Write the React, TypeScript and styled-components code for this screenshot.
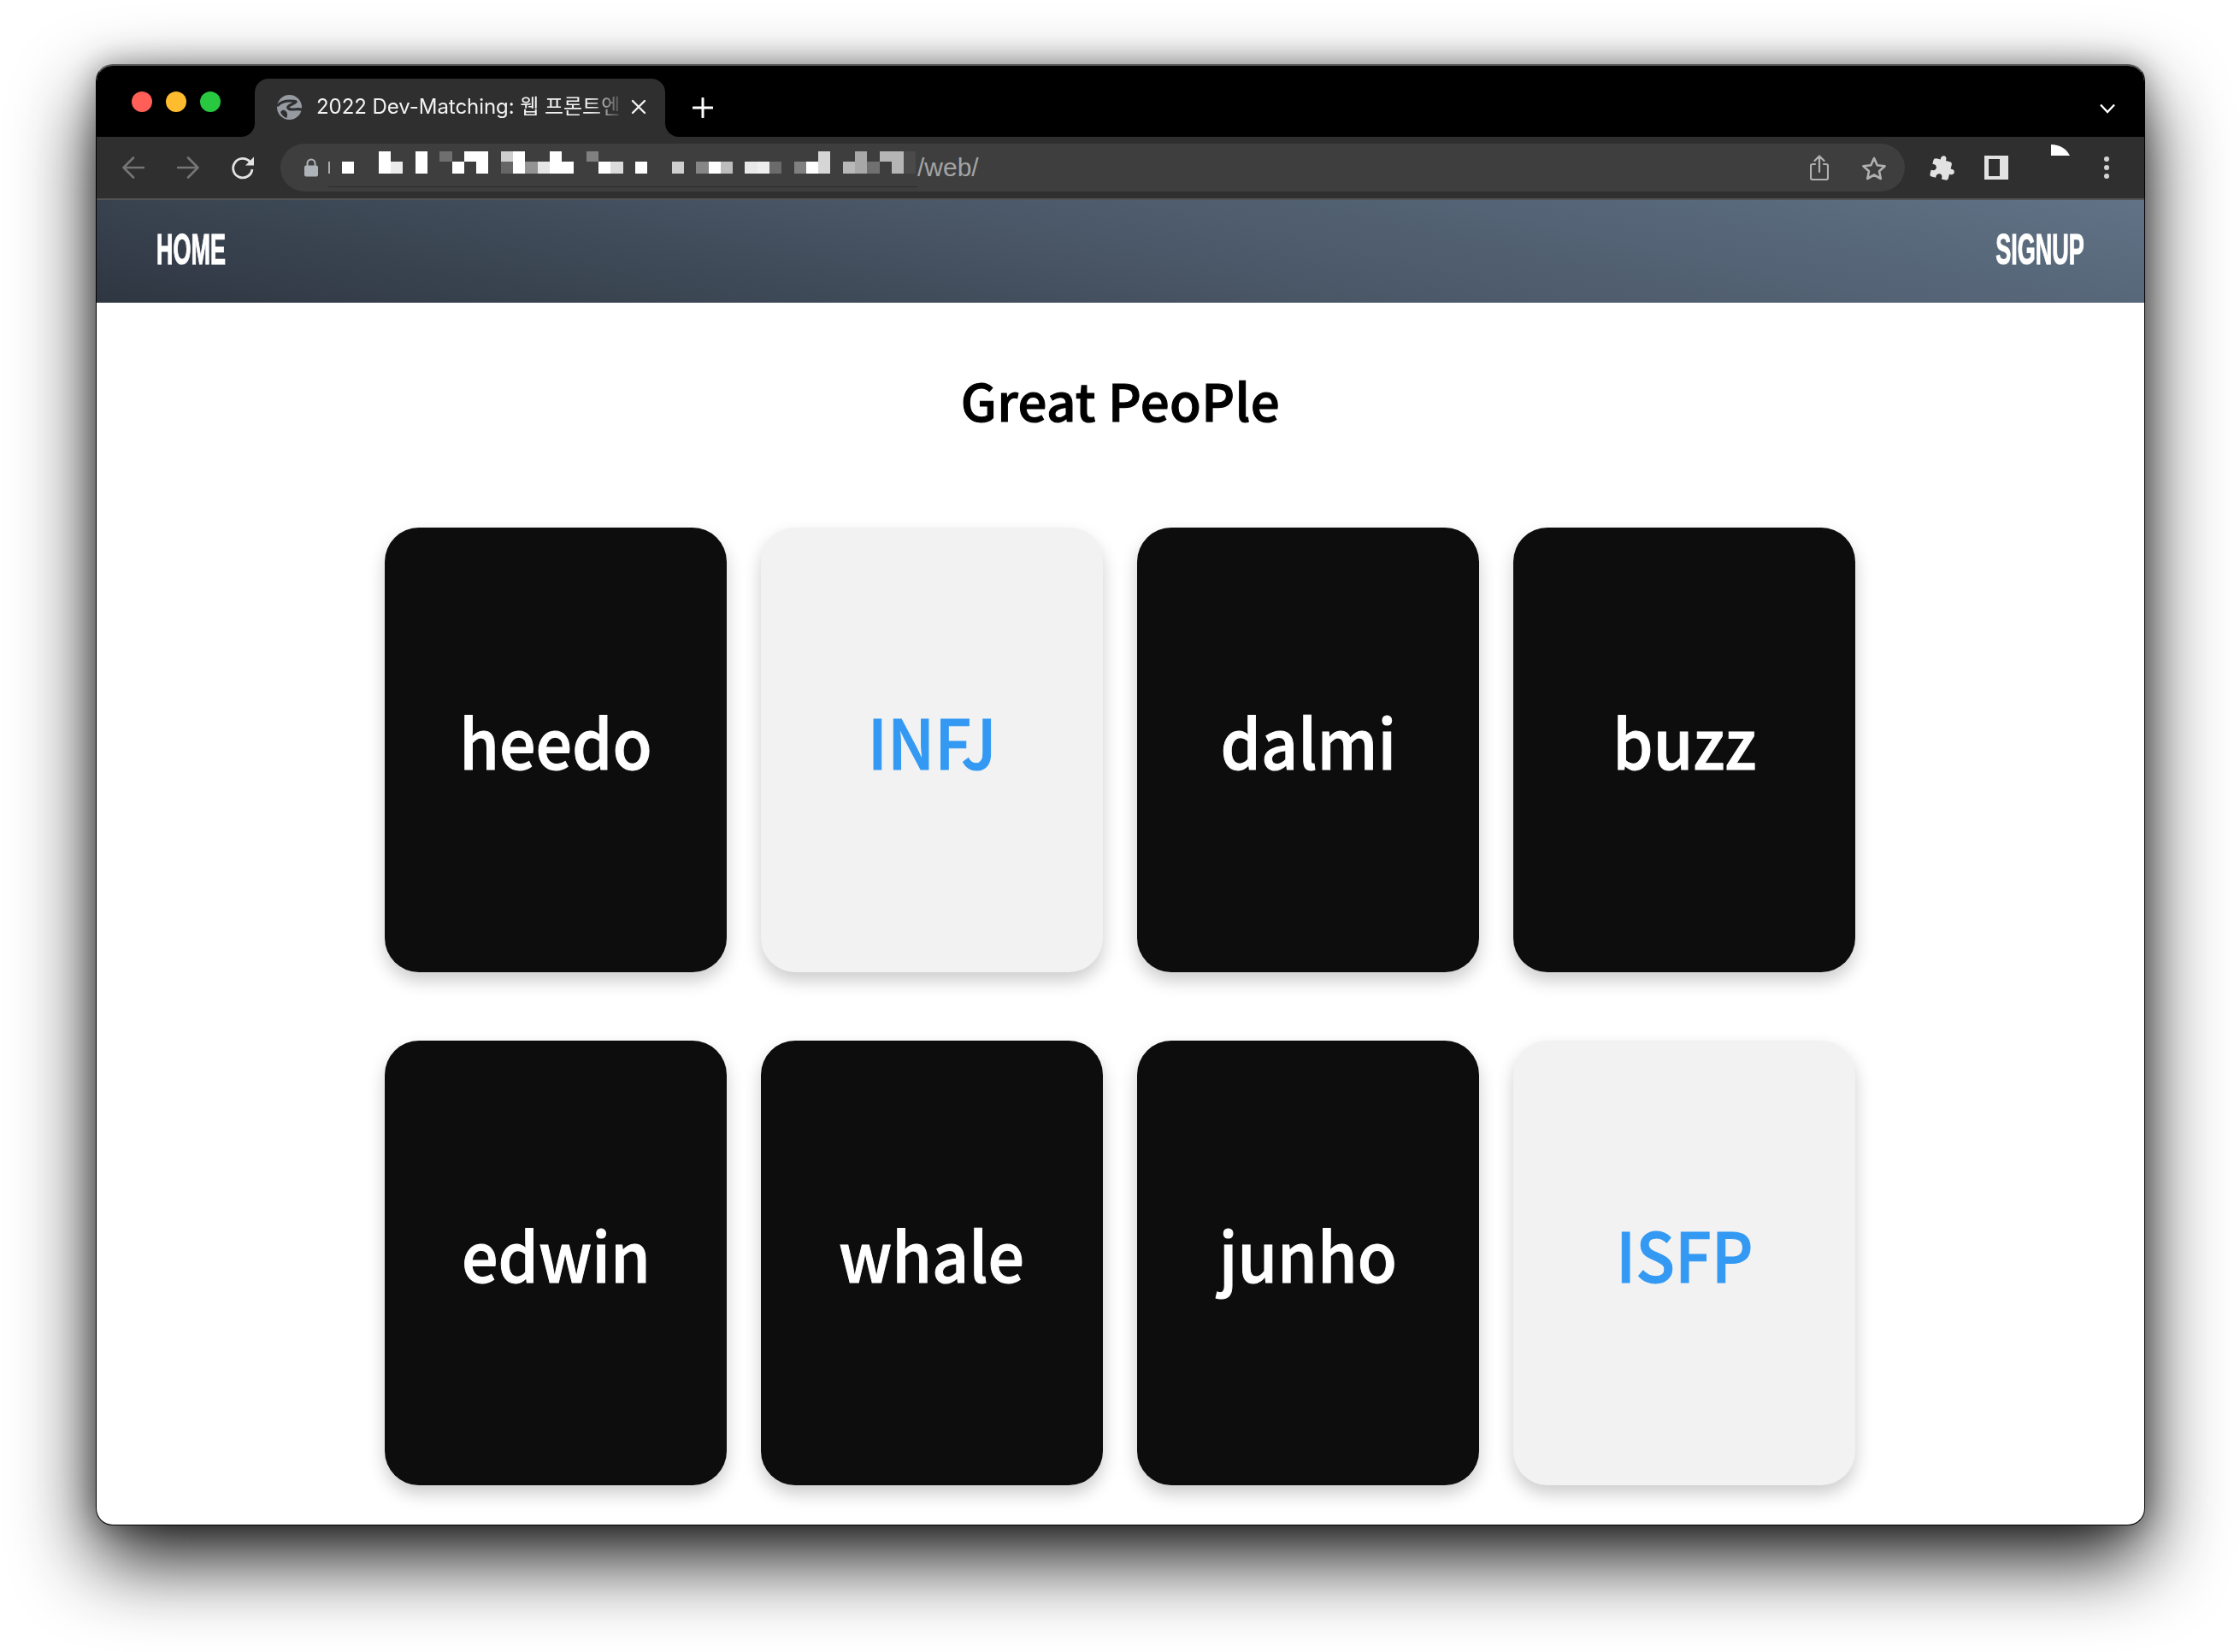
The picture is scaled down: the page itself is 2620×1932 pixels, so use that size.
import React from "react";
import styled, { createGlobalStyle } from "styled-components";

const Global = createGlobalStyle`
  html, body { margin: 0; padding: 0; background: #fff; }
  * { box-sizing: border-box; }
`;

const Page = styled.div`
  width: 2620px;
  height: 1932px;
  padding: 75px 111px 148px 112px;
  overflow: hidden;
  background: #fff;
`;

const Window = styled.div`
  height: 100%;
  display: flex;
  flex-direction: column;
  overflow: hidden;
  border: 1px solid #000;
  border-top: 2px solid #555;
  border-radius: 20px;
  background: #fff;
  box-shadow: 0 40px 92px rgba(0, 0, 0, 0.9), 0 0 34px rgba(0, 0, 0, 0.35);
`;

const TabStrip = styled.div`
  height: 83px;
  flex: none;
  display: flex;
  align-items: flex-end;
  background: #000;
`;

const Lights = styled.div`
  width: 185px;
  height: 100%;
  flex: none;
  display: flex;
  gap: 16px;
  padding: 30px 0 0 41px;
`;

const Light = styled.span<{ $c: string }>`
  width: 24px;
  height: 24px;
  border-radius: 50%;
  background: ${(p) => p.$c};
`;

const Tab = styled.div`
  position: relative;
  width: 480px;
  height: 68px;
  flex: none;
  display: flex;
  align-items: center;
  padding: 0 0 2px 26px;
  background: #2f2f2f;
  border-radius: 16px 16px 0 0;
  &::before, &::after {
    content: "";
    position: absolute;
    bottom: 0;
    width: 16px;
    height: 16px;
  }
  &::before { left: -16px; background: radial-gradient(circle at 0 0, #000 15.5px, #2f2f2f 16.5px); }
  &::after { right: -16px; background: radial-gradient(circle at 100% 0, #000 15.5px, #2f2f2f 16.5px); }
`;

const Favicon = styled.svg`
  flex: none;
`;

const TabTitle = styled.div`
  width: 356px;
  margin-left: 17px;
  flex: none;
  white-space: nowrap;
  color: #f2f2f2;
  font: 400 24px/1.3 Inter, "Noto Sans CJK KR", sans-serif;
  letter-spacing: -0.05px;
  -webkit-mask-image: linear-gradient(to right, #000 90%, rgba(0, 0, 0, 0.15) 100%);
  mask-image: linear-gradient(to right, #000 90%, rgba(0, 0, 0, 0.15) 100%);
`;

const TabClose = styled.svg`
  margin-left: 12px;
  flex: none;
`;

const NewTab = styled.svg`
  margin: 0 0 22px 32px;
  flex: none;
`;

const StripEnd = styled.svg`
  margin: 0 34px 27px auto;
  flex: none;
`;

const Toolbar = styled.div`
  height: 74px;
  flex: none;
  display: flex;
  align-items: center;
  background: #2f2f2f;
  border-bottom: 2px solid #545454;
`;

const ToolIcon = styled.svg<{ $ml: number }>`
  flex: none;
  margin-left: ${(p) => p.$ml}px;
`;

const PieGlyph = styled.svg`
  flex: none;
  align-self: flex-start;
  margin: 9px 0 0 50px;
`;

const Omnibox = styled.div`
  width: 1900px;
  height: 56px;
  flex: none;
  margin-left: 30px;
  display: flex;
  align-items: center;
  padding: 0 21px 0 27px;
  background: #3e3e3e;
  border-radius: 28px;
`;

const LockIcon = styled.svg`
  flex: none;
`;

const Mosaic = styled.svg`
  flex: none;
  align-self: flex-start;
  margin: 9px 0 0 11px;
`;

const UrlPath = styled.span`
  color: #a4a4a4;
  font: 400 30px/1 "Liberation Sans", sans-serif;
`;

const Spacer = styled.div`
  flex: 1;
`;

const ShareIcon = styled.svg`
  flex: none;
`;

const Header = styled.header`
  height: 120px;
  flex: none;
  display: flex;
  align-items: center;
  justify-content: space-between;
  padding: 0 70px 5px;
  background: linear-gradient(12deg, #2e3641 0%, #4a5767 50%, #607286 100%);
`;

const NavLink = styled.a<{ $origin: string }>`
  display: inline-block;
  color: #fff;
  font: 700 50px/1 "Liberation Sans", sans-serif;
  transform: scaleX(0.54);
  transform-origin: ${(p) => p.$origin} center;
  -webkit-text-stroke: 1.2px #fff;
`;

const Main = styled.main`
  flex: 1;
  min-height: 0;
`;

const Title = styled.h1`
  margin: 0;
  padding-top: 69px;
  height: 263px;
  text-align: center;
  color: #000;
  font: 500 60px/88px "Noto Sans CJK KR", sans-serif;
  letter-spacing: 0.4px;
  -webkit-text-stroke: 1.1px #000;
`;

const Grid = styled.div`
  width: 1720px;
  margin-left: 337px;
  display: grid;
  grid-template-columns: repeat(4, 400px);
  grid-auto-rows: 520px;
  column-gap: 40px;
  row-gap: 80px;
`;

const Card = styled.div<{ $flipped?: boolean }>`
  display: flex;
  align-items: center;
  justify-content: center;
  padding-bottom: 25px;
  border-radius: 40px;
  background: ${(p) => (p.$flipped ? "#f2f2f2" : "#0d0d0d")};
  color: ${(p) => (p.$flipped ? "#3399f3" : "#fff")};
  box-shadow: 0 10px 20px rgba(0, 0, 0, 0.2);
`;

const CardLabel = styled.span`
  display: inline-block;
  font: 500 80px/1.2 "Noto Sans CJK KR", sans-serif;
  transform: scaleX(0.94);
  -webkit-text-stroke: 1px currentColor;
`;

const mosaic: [number, number, number, string][] = [
  [384, 189, 2, "#a8aeb5"], [400, 189, 14, "#fff"],
  [443, 177, 14, "#fff"], [443, 189, 14, "#fff"], [457, 189, 14, "#ececec"],
  [486, 177, 14, "#fff"], [486, 189, 14, "#fff"],
  [514, 177, 15, "#6f6f6f"], [529, 189, 14, "#fff"], [543, 177, 14, "#fff"],
  [557, 177, 14, "#fff"], [557, 189, 14, "#fff"],
  [586, 177, 14, "#cfcfcf"], [586, 189, 14, "#666"], [600, 177, 14, "#fff"], [600, 189, 14, "#fff"],
  [614, 189, 15, "#939393"], [629, 189, 14, "#e6e6e6"], [643, 177, 14, "#fff"], [643, 189, 14, "#fff"],
  [657, 189, 14, "#fff"], [686, 177, 14, "#808080"], [700, 189, 14, "#fff"], [714, 189, 15, "#dcdcdc"],
  [743, 189, 14, "#fff"], [786, 189, 14, "#cfcfcf"], [814, 189, 15, "#868686"], [829, 189, 14, "#fff"],
  [843, 189, 14, "#bdbdbd"], [871, 189, 15, "#e8e8e8"], [886, 189, 14, "#eee"], [900, 189, 14, "#6b6b6b"],
  [929, 189, 14, "#808080"], [943, 189, 14, "#fff"], [957, 177, 14, "#d6d6d6"], [957, 189, 14, "#d6d6d6"],
  [986, 189, 14, "#b8b8b8"], [1000, 177, 14, "#a8a8a8"], [1000, 189, 14, "#a8a8a8"], [1014, 189, 15, "#707070"],
  [1029, 177, 14, "#b5b5b5"], [1043, 177, 14, "#b5b5b5"], [1043, 189, 14, "#b5b5b5"],
  [1057, 177, 14, "#4a4a4a"], [1057, 189, 14, "#4a4a4a"],
];

const cards: { label: string; flipped?: boolean }[] = [
  { label: "heedo" }, { label: "INFJ", flipped: true }, { label: "dalmi" }, { label: "buzz" },
  { label: "edwin" }, { label: "whale" }, { label: "junho" }, { label: "ISFP", flipped: true },
];

export default function App() {
  return (
    <Page>
      <Global />
      <Window>
        <TabStrip>
          <Lights>
            <Light $c="#ff5f57" />
            <Light $c="#febc2e" />
            <Light $c="#28c840" />
          </Lights>
          <Tab>
            <Favicon width="29" height="29" viewBox="0 0 29 29">
              <circle cx="14.5" cy="14.5" r="14.5" fill="#969ba2" />
              <path d="M1 12c4-4 9-5 14-5 3 0 6 0 7 1-2 3-8 3-9 6-1 2 2 3 5 3 4 0 8-1 10 0" fill="none" stroke="#2f2f2f" strokeWidth="3.2" strokeLinecap="round" />
              <path d="M6 18c3-1 5 1 6 4 0 2 0 4-1 5-3-1-6-4-7-7z" fill="#2f2f2f" />
            </Favicon>
            <TabTitle>2022 Dev-Matching: 웹 프론트엔</TabTitle>
            <TabClose width="18" height="18" viewBox="0 0 18 18">
              <path d="M2 2l14 14M16 2L2 16" stroke="#f2f2f2" strokeWidth="2.4" strokeLinecap="round" />
            </TabClose>
          </Tab>
          <NewTab width="24" height="24" viewBox="0 0 24 24">
            <path d="M12 1v22M1 12h22" stroke="#fff" strokeWidth="3" strokeLinecap="round" />
          </NewTab>
          <StripEnd width="18" height="12" viewBox="0 0 18 12">
            <path d="M1 1.500l8 8.500 8-8.500" fill="none" stroke="#fff" strokeWidth="2.400" />
          </StripEnd>
        </TabStrip>

        <Toolbar>
          <ToolIcon $ml={30} width="26" height="26" viewBox="0 0 26 26">
            <path d="M25 13H2M13 1.500L1.500 13 13 24.500" fill="none" stroke="#757575" strokeWidth="2.600" strokeLinecap="round" strokeLinejoin="round" />
          </ToolIcon>
          <ToolIcon $ml={38} width="26" height="26" viewBox="0 0 26 26">
            <path d="M1 13h23M13 1.500L24.500 13 13 24.500" fill="none" stroke="#757575" strokeWidth="2.600" strokeLinecap="round" strokeLinejoin="round" />
          </ToolIcon>
          <ToolIcon $ml={37} width="28" height="28" viewBox="0 0 28 28">
            <path d="M22.500 7.500A11.200 11.200 0 1 0 25 16" fill="none" stroke="#e2e2e2" strokeWidth="2.800" />
            <path d="M27 1.500V11.500H17z" fill="#e2e2e2" />
          </ToolIcon>
          <Omnibox>
            <LockIcon width="18" height="22" viewBox="0 0 18 22">
              <path d="M4.500 9V6a4.500 4.500 0 0 1 9 0v3" fill="none" stroke="#aeb3ba" strokeWidth="2" />
              <rect x="1" y="8.500" width="16" height="13" rx="2" fill="#aeb3ba" />
            </LockIcon>
            <Mosaic width="689" height="43" viewBox="384 177 689 43">
              {mosaic.map(([x, y, w, c], i) => (
                <rect key={i} x={x} y={y} width={w} height={y === 177 ? 12 : 14} fill={c} />
              ))}
              <rect x="384" y="218" width="689" height="1" fill="#2a2a2a" />
            </Mosaic>
            <UrlPath>/web/</UrlPath>
            <Spacer />
            <ShareIcon width="22" height="30" viewBox="0 0 22 30">
              <path d="M6 11H3a2 2 0 0 0-2 2v14a2 2 0 0 0 2 2h16a2 2 0 0 0 2-2V13a2 2 0 0 0-2-2h-3M11 20V2M5.500 7L11 1.500 16.500 7" fill="none" stroke="#b0b0b0" strokeWidth="2.200" strokeLinecap="round" strokeLinejoin="round" />
            </ShareIcon>
            <ToolIcon $ml={38} width="30" height="29" viewBox="0 0 30 29">
              <path d="M15 3l3.700 8.200 8.900 1-6.600 6 1.800 8.800L15 22.500 7.200 27l1.800-8.800-6.600-6 8.900-1z" fill="none" stroke="#b0b0b0" strokeWidth="2.600" strokeLinejoin="round" />
            </ToolIcon>
          </Omnibox>
          <ToolIcon $ml={29} width="31" height="31" viewBox="0 0 24 24">
            <g transform="rotate(14 12 12)">
              <path d="M20.500 11H19V7c0-1.100-.9-2-2-2h-4V3.500C13 2.120 11.880 1 10.500 1S8 2.120 8 3.500V5H4c-1.100 0-1.990.9-1.990 2v3.800H3.500c1.490 0 2.700 1.210 2.700 2.700s-1.210 2.700-2.700 2.700H2V20c0 1.100.9 2 2 2h3.800v-1.500c0-1.490 1.210-2.700 2.700-2.700 1.490 0 2.700 1.210 2.700 2.700V22H17c1.100 0 2-.9 2-2v-4h1.500c1.380 0 2.500-1.120 2.500-2.500S21.880 11 20.500 11z" fill="#e2e2e2" />
            </g>
          </ToolIcon>
          <ToolIcon $ml={33} width="28" height="28" viewBox="0 0 28 28">
            <path fillRule="evenodd" d="M0 0h28v28H0zM5 4v20h13V4z" fill="#e2e2e2" />
          </ToolIcon>
          <PieGlyph width="22" height="13" viewBox="0 0 22 13">
            <path d="M0 0c10 0 18 5 22 13H0z" fill="#fff" />
          </PieGlyph>
          <ToolIcon $ml={40} width="6" height="26" viewBox="0 0 6 26">
            <circle cx="3" cy="3" r="3" fill="#d4d4d4" />
            <circle cx="3" cy="13" r="3" fill="#d4d4d4" />
            <circle cx="3" cy="23" r="3" fill="#d4d4d4" />
          </ToolIcon>
        </Toolbar>

        <Header>
          <NavLink $origin="left">HOME</NavLink>
          <NavLink $origin="right">SIGNUP</NavLink>
        </Header>

        <Main>
          <Title>Great PeoPle</Title>
          <Grid>
            {cards.map((c) => (
              <Card key={c.label} $flipped={c.flipped}>
                <CardLabel>{c.label}</CardLabel>
              </Card>
            ))}
          </Grid>
        </Main>
      </Window>
    </Page>
  );
}
